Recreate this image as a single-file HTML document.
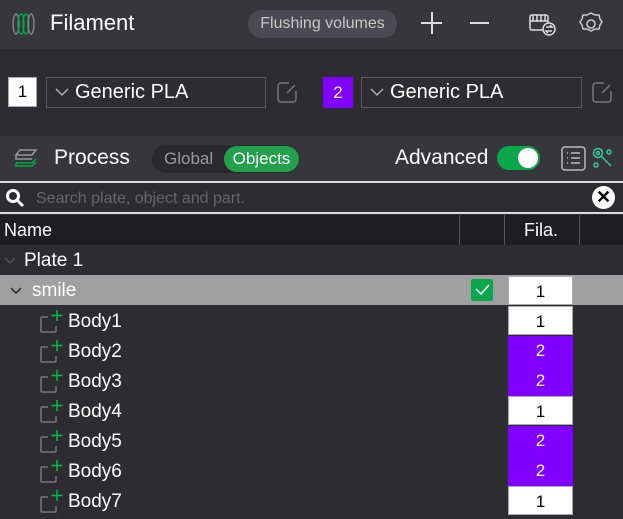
<!DOCTYPE html><html><head><style>
*{margin:0;padding:0;box-sizing:border-box}
body{width:623px;height:519px;background:#2d2d31;font-family:"Liberation Sans",sans-serif;color:#fff;position:relative;overflow:hidden}
.a{position:absolute}
.row{position:absolute;left:0;width:623px;height:30px}
.t{font-size:19px;white-space:nowrap}
.fb{position:absolute;left:508px;width:65px;height:29px;font-size:17px;color:#000;text-align:center;line-height:29px;background:#fff;border:1px solid #aaa}
.fb.p{background:#8000ff;color:#fff;border:none}
</style></head><body>
<div class="a" style="left:0;top:0;width:623px;height:49px;background:#36363b"></div>
<div class="a" style="left:0;top:136px;width:623px;height:45px;background:#36363b"></div>
<svg class="a" style="left:12px;top:12px" width="24" height="24"><g fill="none" stroke-width="1.4"><ellipse cx="4" cy="12" rx="3" ry="10" stroke="#888"/><ellipse cx="9" cy="12" rx="3" ry="10" stroke="#0a4"/><ellipse cx="14" cy="12" rx="3" ry="10" stroke="#0a4"/><ellipse cx="19" cy="12" rx="3" ry="10" stroke="#888"/></g></svg>
<div class="a t" style="left:50px;top:10px;font-size:22px">Filament</div>
<div class="a" style="left:248px;top:10px;width:149px;height:28px;border-radius:14px;background:#4a4a50;color:#c8c8c8;font-size:16px;line-height:28px;text-align:center">Flushing volumes</div>
<div class="a" style="left:421px;top:22px;width:21px;height:2px;background:#ddd"></div><div class="a" style="left:431px;top:12px;width:2px;height:22px;background:#ddd"></div>
<div class="a" style="left:470px;top:22px;width:19px;height:2px;background:#ddd"></div>
<svg class="a" style="left:528px;top:12px" width="30" height="26" fill="none" stroke="#ddd" stroke-width="1.5"><rect x="2" y="3" width="18" height="15" rx="2"/><path d="M5 3v6M9 3v6M13 3v6M17 3v6M2 9h18"/><circle cx="21" cy="17" r="6" fill="#36363b"/><path d="M18 15h6l-2-2M24 19h-6l2 2"/></svg>
<svg class="a" style="left:578px;top:11px" width="26" height="26" fill="none" stroke="#ccc" stroke-width="1.5"><path d="M13 2l4 2 4 0 1 4 2 3-2 3-1 4-4 0-4 2-4-2-4 0-1-4-2-3 2-3 1-4 4 0z"/><circle cx="13" cy="13" r="4"/></svg>

<div class="a" style="left:8px;top:77px;width:29px;height:30px;background:#fff;border:1px solid #aaa;color:#000;font-size:17px;text-align:center;line-height:28px">1</div>
<div class="a" style="left:46px;top:77px;width:220px;height:31px;border:1px solid #5a5a5e"></div>
<svg class="a" style="left:55px;top:88px" width="14" height="8" fill="none" stroke="#bbb" stroke-width="1.3"><path d="M1 1l6 6 6-6"/></svg>
<div class="a t" style="left:75px;top:81px;font-size:20px">Generic PLA</div>
<svg class="a" style="left:276px;top:80px" width="22" height="24" fill="none" stroke="#777" stroke-width="1.5"><path d="M13 3H5a3 3 0 0 0-3 3v13a3 3 0 0 0 3 3h12a3 3 0 0 0 3-3v-8M11 13l8-8"/></svg>
<div class="a" style="left:323px;top:77px;width:30px;height:31px;background:#8000ff;font-size:17px;text-align:center;line-height:31px">2</div>
<div class="a" style="left:361px;top:77px;width:221px;height:31px;border:1px solid #5a5a5e"></div>
<svg class="a" style="left:370px;top:88px" width="14" height="8" fill="none" stroke="#bbb" stroke-width="1.3"><path d="M1 1l6 6 6-6"/></svg>
<div class="a t" style="left:390px;top:81px;font-size:20px">Generic PLA</div>
<svg class="a" style="left:591px;top:80px" width="22" height="24" fill="none" stroke="#777" stroke-width="1.5"><path d="M13 3H5a3 3 0 0 0-3 3v13a3 3 0 0 0 3 3h12a3 3 0 0 0 3-3v-8M11 13l8-8"/></svg>

<svg class="a" style="left:13px;top:148px" width="26" height="22" fill="none" stroke-width="1.5"><path d="M3 7l4-5h16l-4 5z M3 7v4l4 0h12" stroke="#999"/><path d="M3 15h16l4-4M3 15v3h16l4-4" stroke="#0a4"/></svg>
<div class="a t" style="left:54px;top:146px;font-size:21px">Process</div>
<div class="a" style="left:152px;top:145px;width:148px;height:28px;border-radius:14px;background:#2a2a2e"></div>
<div class="a t" style="left:164px;top:149px;font-size:17px;color:#999">Global</div>
<div class="a" style="left:224px;top:146px;width:75px;height:26px;border-radius:13px;background:#22a04c;font-size:17px;text-align:center;line-height:26px">Objects</div>
<div class="a t" style="left:395px;top:146px;font-size:21px">Advanced</div>
<div class="a" style="left:497px;top:146px;width:43px;height:24px;border-radius:12px;background:#0aa84a"></div>
<div class="a" style="left:518px;top:148px;width:20px;height:20px;border-radius:10px;background:#fff"></div>
<svg class="a" style="left:561px;top:146px" width="26" height="26" fill="none" stroke="#bbb" stroke-width="1.5"><rect x="1" y="1" width="23" height="23" rx="3"/><path d="M6 7h1M10 7h9M6 12h1M10 12h9M6 17h1M10 17h9"/></svg>
<svg class="a" style="left:591px;top:146px" width="24" height="24" fill="none" stroke="#3c9" stroke-width="1.5"><circle cx="7" cy="7" r="4.5"/><circle cx="7" cy="7" r="1.5"/><circle cx="18" cy="6" r="2"/><circle cx="5" cy="19" r="2"/><path d="M10 10l10 10"/></svg>

<div class="a" style="left:0;top:181px;width:623px;height:33px;border-top:2px solid #ddd;border-bottom:2px solid #ddd;background:#2d2d31"></div>
<svg class="a" style="left:5px;top:188px" width="20" height="20" fill="none" stroke="#fff" stroke-width="3"><circle cx="8" cy="8" r="5.5"/><path d="M12 12l6 6"/></svg>
<div class="a t" style="left:36px;top:190px;font-size:16px;color:#666">Search plate, object and part.</div>
<div class="a" style="left:592px;top:186px;width:23px;height:23px;border-radius:12px;background:#fff;color:#000;font-size:18px;font-weight:bold;text-align:center;line-height:23px">✕</div>

<div class="row" style="top:215px;height:30px;background:#1e1e20"></div>
<div class="a" style="left:459px;top:215px;width:1px;height:30px;background:#555"></div>
<div class="a" style="left:504px;top:215px;width:1px;height:30px;background:#555"></div>
<div class="a" style="left:579px;top:215px;width:1px;height:30px;background:#555"></div>
<div class="a t" style="left:4px;top:220px;font-size:18px">Name</div>
<div class="a t" style="left:524px;top:220px;font-size:18px">Fila.</div>

<svg class="a" style="left:4px;top:257px" width="12" height="8" fill="none" stroke="#555" stroke-width="1.3"><path d="M1 1l5 5 5-5"/></svg>
<div class="a t" style="left:24px;top:250px;font-size:19px">Plate 1</div>
<div class="row" style="top:275px;background:#a0a0a0"></div>
<svg class="a" style="left:10px;top:287px" width="12" height="8" fill="none" stroke="#222" stroke-width="1.4"><path d="M1 1l5 5 5-5"/></svg>
<div class="a t" style="left:32px;top:280px;font-size:19px">smile</div>
<div class="a" style="left:471px;top:279px;width:22px;height:22px;background:#0aa84a;border-radius:2px"></div>
<svg class="a" style="left:475px;top:284px" width="15" height="12" fill="none" stroke="#fff" stroke-width="1.5"><path d="M1 5l5 5 8-9"/></svg>
<div class="fb" style="top:276px">1</div>

<div class="fb" style="top:306px">1</div>
<div class="fb p" style="top:336px;height:30px;line-height:30px">2</div>
<div class="fb p" style="top:366px;height:30px;line-height:30px">2</div>
<div class="fb" style="top:396px">1</div>
<div class="fb p" style="top:426px;height:30px;line-height:30px">2</div>
<div class="fb p" style="top:456px;height:30px;line-height:30px">2</div>
<div class="fb" style="top:486px">1</div>

<svg class="a" style="left:38px;top:309px" width="30" height="210" fill="none" stroke-width="1.5">
<g><path d="M10 8H4a1 1 0 0 0-1 1v13a1 1 0 0 0 1 1h13a1 1 0 0 0 1-1v-5" stroke="#777"/><path d="M19 1v11M13.5 6.5h11" stroke="#0b4"/></g>
<g transform="translate(0,30)"><path d="M10 8H4a1 1 0 0 0-1 1v13a1 1 0 0 0 1 1h13a1 1 0 0 0 1-1v-5" stroke="#777"/><path d="M19 1v11M13.5 6.5h11" stroke="#0b4"/></g>
<g transform="translate(0,60)"><path d="M10 8H4a1 1 0 0 0-1 1v13a1 1 0 0 0 1 1h13a1 1 0 0 0 1-1v-5" stroke="#777"/><path d="M19 1v11M13.5 6.5h11" stroke="#0b4"/></g>
<g transform="translate(0,90)"><path d="M10 8H4a1 1 0 0 0-1 1v13a1 1 0 0 0 1 1h13a1 1 0 0 0 1-1v-5" stroke="#777"/><path d="M19 1v11M13.5 6.5h11" stroke="#0b4"/></g>
<g transform="translate(0,120)"><path d="M10 8H4a1 1 0 0 0-1 1v13a1 1 0 0 0 1 1h13a1 1 0 0 0 1-1v-5" stroke="#777"/><path d="M19 1v11M13.5 6.5h11" stroke="#0b4"/></g>
<g transform="translate(0,150)"><path d="M10 8H4a1 1 0 0 0-1 1v13a1 1 0 0 0 1 1h13a1 1 0 0 0 1-1v-5" stroke="#777"/><path d="M19 1v11M13.5 6.5h11" stroke="#0b4"/></g>
<g transform="translate(0,180)"><path d="M10 8H4a1 1 0 0 0-1 1v13a1 1 0 0 0 1 1h13a1 1 0 0 0 1-1v-5" stroke="#777"/><path d="M19 1v11M13.5 6.5h11" stroke="#0b4"/></g>
</svg>
<div class="a t" style="left:68px;top:311px">Body1</div>
<div class="a t" style="left:68px;top:341px">Body2</div>
<div class="a t" style="left:68px;top:371px">Body3</div>
<div class="a t" style="left:68px;top:401px">Body4</div>
<div class="a t" style="left:68px;top:431px">Body5</div>
<div class="a t" style="left:68px;top:461px">Body6</div>
<div class="a t" style="left:68px;top:491px">Body7</div>
</body></html>
